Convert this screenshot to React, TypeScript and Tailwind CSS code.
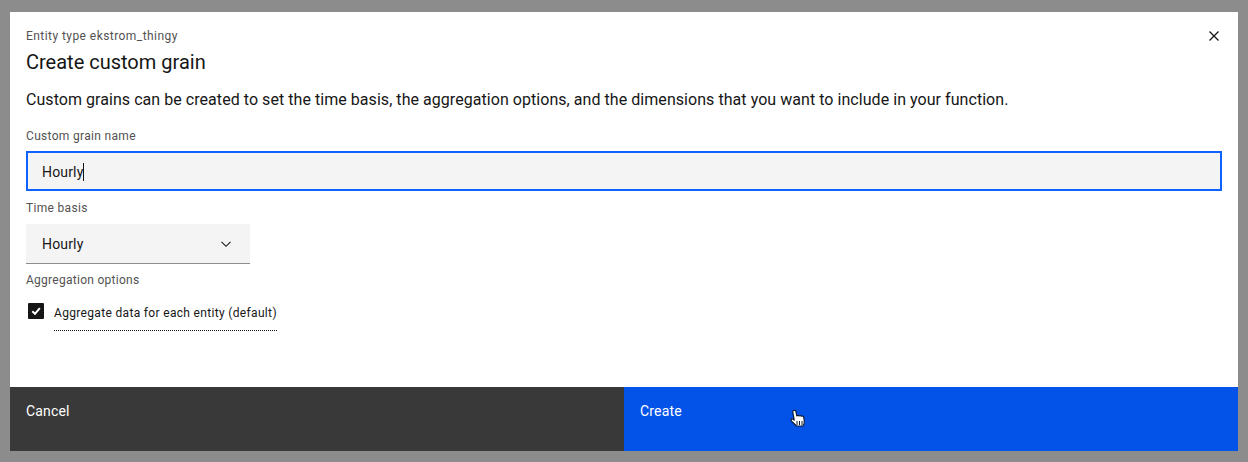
import React from "react";

const font = { fontFamily: 'Roboto, sans-serif' };

function HandCursor() {
  return (
    <svg className="absolute left-[166px] top-[22px]" width="16" height="20" viewBox="0 0 16 20">
      <path
        d="M3.500 1.500c.9-.6 2.200 0 2.400 1L6.800 7c.3-.8 1.900-.9 2.300 0 .3-.6 1.900-.6 2.300.2.500-.4 2-.2 2.300.8l.6 4.500c.2 2-.5 3.500-1.400 4.500H6.500L1.800 12.500c-.8-1-1.100-2-.4-2.500.7-.5 1.700 0 2.800 1.200L2.800 3c-.1-.6.200-1.200.7-1.500z"
        fill="#fff"
        stroke="#0a1a33"
        strokeWidth="1.200"
        strokeLinejoin="round"
      />
      <path d="M7 12v4M9.500 12v4M12 12v4" stroke="#0a1a33" strokeWidth="1" />
    </svg>
  );
}

export default function App() {
  return (
    <div style={font} className="h-[462px] w-[1248px] bg-[#8c8c8c] pt-3 pb-[11px] px-[10px] overflow-hidden">
      <div className="flex h-[439px] flex-col bg-white">
        <div className="flex-1 pl-4 pr-4 pt-4">
          <div className="flex justify-between">
            <div className="text-[12px] leading-4 tracking-[0.44px] text-[#525252]">Entity type ekstrom_thingy</div>
            <svg width="16" height="16" viewBox="0 0 16 16">
              <path d="M3.500 3.500l9 9M12.500 3.500l-9 9" stroke="#161616" strokeWidth="1.300" />
            </svg>
          </div>
          <div className="mt-[4px] text-[20px] leading-[28px] text-[#161616]">Create custom grain</div>
          <p className="mt-[12px] text-[16px] leading-[24px] tracking-[0.05px] text-[#161616]">
            Custom grains can be created to set the time basis, the aggregation options, and the dimensions that you want to include in your function.
          </p>
          <div className="mt-[16px] text-[12px] leading-4 tracking-[0.32px] text-[#525252]">Custom grain name</div>
          <div className="mt-[7px] flex h-10 w-[1196px] items-center border-2 border-[#0f62fe] bg-[#f4f4f4] pl-[14px] pt-[2px] text-[14px] tracking-[0.16px] text-[#161616]">
            Hourly<span className="h-[18px] w-px bg-[#161616]" />
          </div>
          <div className="mt-[9px] text-[12px] leading-4 tracking-[0.32px] text-[#525252]">Time basis</div>
          <div className="mt-2 flex h-10 w-[224px] items-center justify-between border-b border-[#8d8d8d] bg-[#f4f4f4] pl-4 pr-4 text-[14px] tracking-[0.16px] text-[#161616]">
            <span className="pt-[2px]">Hourly</span>
            <svg width="16" height="16" viewBox="0 0 16 16">
              <path d="M3.500 5.800L8 10.300l4.500-4.500" fill="none" stroke="#161616" strokeWidth="1.100" />
            </svg>
          </div>
          <div className="mt-2 text-[12px] leading-4 tracking-[0.27px] text-[#525252]">Aggregation options</div>
          <div className="mt-[13px] flex items-start pl-[2px]">
            <span className="mt-[2px] flex h-4 w-4 items-center justify-center rounded-[1px] bg-[#161616]">
              <svg width="12" height="12" viewBox="0 0 12 12">
                <path d="M2.300 6.300L5 8.800l4.800-5.600" fill="none" stroke="#fff" strokeWidth="2" />
              </svg>
            </span>
            <span className="ml-[10px] mt-[2px] border-b border-dotted border-[#161616] pb-[7px] text-[12px] leading-[20px] tracking-[0.33px] text-[#161616]">
              Aggregate data for each entity (default)
            </span>
          </div>
        </div>
        <div className="flex h-16">
          <div className="flex-1 bg-[#393939] px-4 pt-[14px] text-[14px] leading-[20px] tracking-[0.16px] text-white">Cancel</div>
          <div className="relative flex-1 bg-[#0353e9] px-4 pt-[14px] text-[14px] leading-[20px] tracking-[0.16px] text-white">
            Create
            <HandCursor />
          </div>
        </div>
      </div>
    </div>
  );
}
